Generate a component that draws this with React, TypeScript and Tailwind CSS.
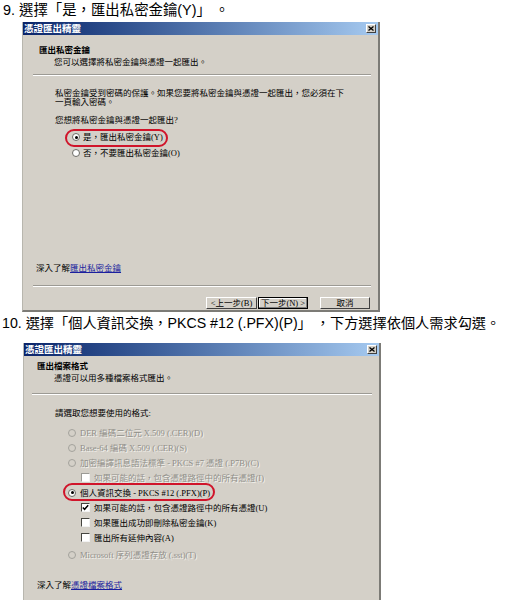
import { ReactNode } from 'react';

function Radio({ checked, disabled }: { checked?: boolean; disabled?: boolean }) {
  return (
    <span
      className={`flex h-[8px] w-[8px] shrink-0 items-center justify-center rounded-full border ${
        disabled ? 'border-[#a3a29c] bg-[#d4d0c8]' : 'border-[#6c6b66] bg-white'
      }`}
    >
      {checked && <span className="h-[3px] w-[3px] rounded-full bg-black" />}
    </span>
  );
}

function Check({ checked, disabled }: { checked?: boolean; disabled?: boolean }) {
  return (
    <span
      className={`flex h-[9px] w-[9px] shrink-0 items-center justify-center border bg-white border-r-[#f2f2f2] border-b-[#f2f2f2] ${
        disabled ? 'border-t-[#9b9a95] border-l-[#9b9a95]' : 'border-t-[#45443f] border-l-[#45443f]'
      }`}
    >
      {checked && (
        <svg width="7" height="7" viewBox="0 0 7 7">
          <path d="M0.8 3.4 L2.6 5.3 L6.2 1.2" stroke="#000" strokeWidth="1.5" fill="none" />
        </svg>
      )}
    </span>
  );
}

function Btn({ children, def }: { children: ReactNode; def?: boolean }) {
  return (
    <div
      className={`flex h-[12px] items-center justify-center bg-[#d4d0c8] text-[8.5px] leading-none text-black ${
        def
          ? 'w-[50px] border border-black shadow-[inset_-1px_-1px_0_#808080,inset_1px_1px_0_#fff]'
          : 'border border-t-white border-l-white border-r-[#404040] border-b-[#404040]'
      }`}
    >
      {children}
    </div>
  );
}

function Sep({ left }: { left: string }) {
  return <div className={`${left} mr-[7px] h-[2px] border-t border-b border-t-[#9c9a94] border-b-white`} />;
}

function Dialog({ className, children }: { className: string; children: ReactNode }) {
  return (
    <div
      className={`${className} flex flex-col border-l border-r-2 border-b-2 border-l-[#b8b6ae] border-r-[#7c7b76] border-b-[#7c7b76] bg-[#d4d0c8] font-['Liberation_Serif','Noto_Sans_CJK_TC',serif] text-[8.5px] leading-[10px] text-black`}
    >
      {/* title bar */}
      <div className="flex h-[13px] shrink-0 items-center bg-linear-to-r from-[#0a246a] to-[#a6caf0]">
        <span className="pl-[1px] font-['Noto_Sans_CJK_TC',sans-serif] text-[9.5px] font-bold leading-[13px] text-white">
          憑證匯出精靈
        </span>
        <span className="ml-auto mr-[2px] flex h-[9px] w-[10px] items-center justify-center border border-t-white border-l-white border-r-[#404040] border-b-[#404040] bg-[#d4d0c8]">
          <svg width="6" height="5" viewBox="0 0 6 5">
            <path d="M0.5 0.5 L5.5 4.5 M5.5 0.5 L0.5 4.5" stroke="#000" strokeWidth="1.3" />
          </svg>
        </span>
      </div>
      {children}
    </div>
  );
}

const dim = 'text-[#908f89] [text-shadow:1px_1px_0_#f4f3ef]';

export default function App() {
  return (
    <div className="h-[600px] w-[520px] overflow-hidden bg-white">
      <div className="h-[22px] pl-[3px] font-['Liberation_Sans','Noto_Sans_CJK_TC',sans-serif] text-[14.4px] leading-[20px] text-black">
        9. 選擇「是，匯出私密金鑰(Y)」 。
      </div>

      <Dialog className="ml-[22px] h-[290px] w-[358px]">
        <div className="ml-[16px] mt-[10px] font-bold">匯出私密金鑰</div>
        <div className="ml-[31px] mt-[2px]">您可以選擇將私密金鑰與憑證一起匯出。</div>
        <div className="mt-[7px]">
          <Sep left="ml-[10px]" />
        </div>
        <div className="ml-[32px] mt-[13px] leading-[9px]">
          私密金鑰受到密碼的保護。如果您要將私密金鑰與憑證一起匯出，您必須在下
          <br />
          一頁輸入密碼。
        </div>
        <div className="ml-[32px] mt-[8px]">您想將私密金鑰與憑證一起匯出?</div>
        <div className="relative mt-[5px] flex h-[14px] items-center pl-[49px]">
          <Radio checked />
          <span className="ml-[3px]">是，匯出私密金鑰(Y)</span>
          <span className="absolute left-[42px] top-[-1px] h-[18px] w-[103px] rounded-[9px] border-2 border-[#d0142a]" />
        </div>
        <div className="mt-[2px] flex h-[14px] items-center pl-[49px]">
          <Radio />
          <span className="ml-[3px]">否，不要匯出私密金鑰(O)</span>
        </div>
        <div className="ml-[13px] mt-[103px]">
          深入了解<span className="text-[#1b1f9e] underline">匯出私密金鑰</span>
        </div>
        <div className="mt-[12px]">
          <Sep left="ml-[10px]" />
        </div>
        <div className="mt-[10px] flex justify-end pr-[8px]">
          <div className="w-[51px]">
            <Btn>&lt;上一步(B)</Btn>
          </div>
          <div className="ml-[1px]">
            <Btn def>下一步(N) &gt;</Btn>
          </div>
          <div className="ml-[12px] w-[50px]">
            <Btn>取消</Btn>
          </div>
        </div>
      </Dialog>

      <div className="h-[31px] pl-[2px] font-['Liberation_Sans','Noto_Sans_CJK_TC',sans-serif] text-[14.2px] leading-[22px] text-black">
        10. 選擇「個人資訊交換，PKCS #12 (.PFX)(P)」 ，下方選擇依個人需求勾選。
      </div>

      <Dialog className="ml-[23px] h-[270px] w-[358px]">
        <div className="ml-[13px] mt-[5px] font-bold">匯出檔案格式</div>
        <div className="ml-[30px] mt-[2px]">憑證可以用多種檔案格式匯出。</div>
        <div className="mt-[10px]">
          <Sep left="ml-[8px]" />
        </div>
        <div className="ml-[31px] mt-[13px]">請選取您想要使用的格式:</div>
        <div className="mt-[7px] flex flex-col">
          <div className="flex h-[15px] items-center pl-[44px]">
            <Radio disabled />
            <span className={`ml-[4px] ${dim}`}>DER 編碼二位元 X.509 (.CER)(D)</span>
          </div>
          <div className="flex h-[15px] items-center pl-[44px]">
            <Radio disabled />
            <span className={`ml-[4px] ${dim}`}>Base-64 編碼 X.509 (.CER)(S)</span>
          </div>
          <div className="flex h-[15px] items-center pl-[44px]">
            <Radio disabled />
            <span className={`ml-[4px] ${dim}`}>加密編譯訊息語法標準 - PKCS #7 憑證 (.P7B)(C)</span>
          </div>
          <div className="flex h-[15px] items-center pl-[57px]">
            <Check disabled />
            <span className={`ml-[4px] ${dim}`}>如果可能的話，包含憑證路徑中的所有憑證(I)</span>
          </div>
          <div className="relative flex h-[15px] items-center pl-[44px]">
            <Radio checked />
            <span className="ml-[4px]">個人資訊交換 - PKCS #12 (.PFX)(P)</span>
            <span className="absolute left-[39px] top-[-2px] h-[18px] w-[152px] rounded-[9px] border-2 border-[#d0142a]" />
          </div>
          <div className="flex h-[15px] items-center pl-[57px]">
            <Check checked />
            <span className="ml-[4px]">如果可能的話，包含憑證路徑中的所有憑證(U)</span>
          </div>
          <div className="flex h-[15px] items-center pl-[57px]">
            <Check />
            <span className="ml-[4px]">如果匯出成功即刪除私密金鑰(K)</span>
          </div>
          <div className="flex h-[15px] items-center pl-[57px]">
            <Check />
            <span className="ml-[4px]">匯出所有延伸內容(A)</span>
          </div>
          <div className="mt-[2px] flex h-[15px] items-center pl-[44px]">
            <Radio disabled />
            <span className={`ml-[4px] ${dim}`}>Microsoft 序列憑證存放 (.sst)(T)</span>
          </div>
        </div>
        <div className="ml-[13px] mt-[18px]">
          深入了解<span className="text-[#1b1f9e] underline">憑證檔案格式</span>
        </div>
      </Dialog>
    </div>
  );
}
